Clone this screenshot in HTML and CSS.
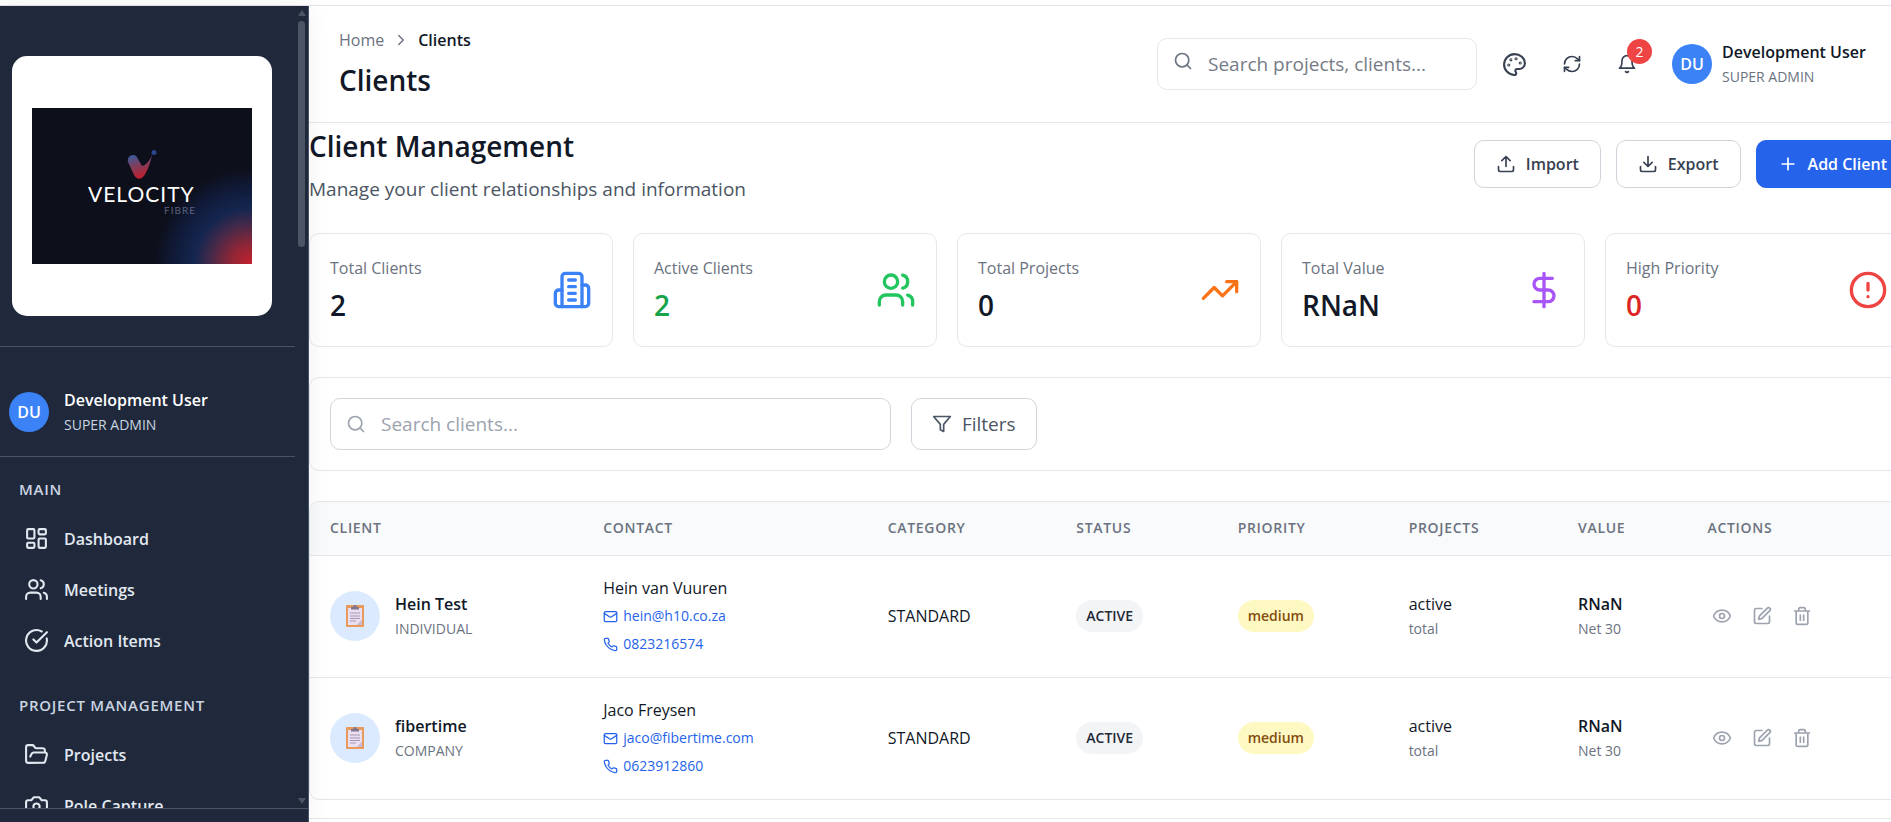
FILE: index.html
```html
<!DOCTYPE html>
<html lang="en">
<head>
<meta charset="utf-8">
<title>Clients</title>
<link rel="stylesheet" href="styles.css">
</head>
<body>
<svg class="sprite" aria-hidden="true">
  <symbol id="i-grid" viewBox="0 0 24 24"><rect width="7" height="9" x="3" y="3" rx="1"/><rect width="7" height="5" x="14" y="3" rx="1"/><rect width="7" height="9" x="14" y="12" rx="1"/><rect width="7" height="5" x="3" y="16" rx="1"/></symbol>
  <symbol id="i-users" viewBox="0 0 24 24"><path d="M16 21v-2a4 4 0 0 0-4-4H6a4 4 0 0 0-4 4v2"/><circle cx="9" cy="7" r="4"/><path d="M22 21v-2a4 4 0 0 0-3-3.87M16 3.13a4 4 0 0 1 0 7.75"/></symbol>
  <symbol id="i-check" viewBox="0 0 24 24"><path d="M21.801 10A10 10 0 1 1 17 3.335"/><path d="m9 11 3 3L22 4"/></symbol>
  <symbol id="i-folder" viewBox="0 0 24 24"><path d="m6 14 1.5-2.9A2 2 0 0 1 9.24 10H20a2 2 0 0 1 1.94 2.5l-1.54 6a2 2 0 0 1-1.95 1.5H4a2 2 0 0 1-2-2V5a2 2 0 0 1 2-2h3.9a2 2 0 0 1 1.69.9l.81 1.2a2 2 0 0 0 1.67.9H18a2 2 0 0 1 2 2v2"/></symbol>
  <symbol id="i-camera" viewBox="0 0 24 24"><path d="M14.5 4h-5L7 7H4a2 2 0 0 0-2 2v9a2 2 0 0 0 2 2h16a2 2 0 0 0 2-2V9a2 2 0 0 0-2-2h-3l-2.5-3z"/><circle cx="12" cy="13" r="3"/></symbol>
  <symbol id="i-chevron" viewBox="0 0 24 24"><path d="m9 18 6-6-6-6"/></symbol>
  <symbol id="i-search" viewBox="0 0 24 24"><circle cx="11" cy="11" r="8"/><path d="m21 21-4.3-4.3"/></symbol>
  <symbol id="i-palette" viewBox="0 0 24 24"><circle cx="13.5" cy="6.5" r=".5"/><circle cx="17.5" cy="10.5" r=".5"/><circle cx="8.5" cy="7.5" r=".5"/><circle cx="6.5" cy="12.5" r=".5"/><path d="M12 2C6.5 2 2 6.5 2 12s4.5 10 10 10c.926 0 1.648-.746 1.648-1.688 0-.437-.18-.835-.437-1.125-.29-.289-.438-.652-.438-1.125a1.64 1.64 0 0 1 1.668-1.668h1.996c3.051 0 5.555-2.503 5.555-5.554C21.965 6.012 17.461 2 12 2z"/></symbol>
  <symbol id="i-refresh" viewBox="0 0 24 24"><path d="M3 12a9 9 0 0 1 9-9 9.75 9.75 0 0 1 6.74 2.74L21 8"/><path d="M21 3v5h-5M21 12a9 9 0 0 1-9 9 9.75 9.75 0 0 1-6.74-2.74L3 16"/><path d="M8 16H3v5"/></symbol>
  <symbol id="i-bell" viewBox="0 0 24 24"><path d="M6 8a6 6 0 0 1 12 0c0 7 3 9 3 9H3s3-2 3-9"/><path d="M10.3 21a1.94 1.94 0 0 0 3.4 0"/></symbol>
  <symbol id="i-upload" viewBox="0 0 24 24"><path d="M21 15v4a2 2 0 0 1-2 2H5a2 2 0 0 1-2-2v-4M17 8l-5-5-5 5M12 3v12"/></symbol>
  <symbol id="i-download" viewBox="0 0 24 24"><path d="M21 15v4a2 2 0 0 1-2 2H5a2 2 0 0 1-2-2v-4M7 10l5 5 5-5M12 15V3"/></symbol>
  <symbol id="i-plus" viewBox="0 0 24 24"><path d="M5 12h14M12 5v14"/></symbol>
  <symbol id="i-building" viewBox="0 0 24 24"><path d="M6 22V4a2 2 0 0 1 2-2h8a2 2 0 0 1 2 2v18Z"/><path d="M6 12H4a2 2 0 0 0-2 2v6a2 2 0 0 0 2 2h2M18 9h2a2 2 0 0 1 2 2v9a2 2 0 0 1-2 2h-2M10 6h4M10 10h4M10 14h4M10 18h4"/></symbol>
  <symbol id="i-trend" viewBox="0 0 24 24"><path d="m22 7-8.500 8.500-5-5L2 17"/><path d="M16 7h6v6"/></symbol>
  <symbol id="i-dollar" viewBox="0 0 24 24"><path d="M12 2v20M17 5H9.500a3.500 3.500 0 0 0 0 7h5a3.500 3.500 0 0 1 0 7H6"/></symbol>
  <symbol id="i-alert" viewBox="0 0 24 24"><circle cx="12" cy="12" r="10"/><path d="M12 8v4M12 16h.01"/></symbol>
  <symbol id="i-filter" viewBox="0 0 24 24"><path d="M22 3H2l8 9.460V19l4 2v-8.540L22 3z"/></symbol>
  <symbol id="i-mail" viewBox="0 0 24 24"><rect width="20" height="16" x="2" y="4" rx="2"/><path d="m22 7-8.970 5.700a1.940 1.940 0 0 1-2.060 0L2 7"/></symbol>
  <symbol id="i-phone" viewBox="0 0 24 24"><path d="M22 16.920v3a2 2 0 0 1-2.180 2 19.790 19.790 0 0 1-8.630-3.070 19.500 19.500 0 0 1-6-6 19.790 19.790 0 0 1-3.070-8.670A2 2 0 0 1 4.110 2h3a2 2 0 0 1 2 1.720 12.840 12.840 0 0 0 .7 2.810 2 2 0 0 1-.45 2.110L8.090 9.910a16 16 0 0 0 6 6l1.270-1.270a2 2 0 0 1 2.110-.45 12.840 12.840 0 0 0 2.810.7A2 2 0 0 1 22 16.920z"/></symbol>
  <symbol id="i-eye" viewBox="0 0 24 24"><path d="M2.062 12.348a1 1 0 0 1 0-.696 10.750 10.750 0 0 1 19.876 0 1 1 0 0 1 0 .696 10.750 10.750 0 0 1-19.876 0"/><circle cx="12" cy="12" r="3"/></symbol>
  <symbol id="i-edit" viewBox="0 0 24 24"><path d="M12 3H5a2 2 0 0 0-2 2v14a2 2 0 0 0 2 2h14a2 2 0 0 0 2-2v-7"/><path d="M18.375 2.625a1 1 0 0 1 3 3l-9.013 9.014a2 2 0 0 1-.853.505l-2.873.84a.5.5 0 0 1-.62-.62l.84-2.873a2 2 0 0 1 .506-.852z"/></symbol>
  <symbol id="i-trash" viewBox="0 0 24 24"><path d="M3 6h18M19 6v14a2 2 0 0 1-2 2H7a2 2 0 0 1-2-2V6M8 6V4a2 2 0 0 1 2-2h4a2 2 0 0 1 2 2v2M10 11v6M14 11v6"/></symbol>
  <symbol id="i-clipboard" viewBox="0 0 18 22"><rect width="18" height="22" rx="1" fill="#e8995c" stroke="none"/><path d="M2 3h14v12l-5 5H2z" fill="#e9dff0" stroke="none"/><path d="M16 15v5h-5z" fill="#cbb9d8" stroke="none"/><path d="M5 4.500V2h2a2 2 0 0 1 4 0h2v2.500z" fill="#83768c" stroke="none"/><path d="M4 8h10M4 11h10M4 13.500h10M4 16h6" stroke="#a698b4" stroke-width="1"/></symbol>
</svg>

<div class="app">
  <aside class="sidebar">
    <div class="sidebar-scroll">
      <div class="sidebar-content">
        <div class="brand">
          <div class="brand-card">
            <svg class="brand-art" viewBox="0 0 220 156" role="img" aria-label="Velocity Fibre">
              <defs>
                <radialGradient id="glow" gradientUnits="userSpaceOnUse" cx="218" cy="156" r="96">
                  <stop offset="0" stop-color="#c3202f"/><stop offset=".2" stop-color="#8f2636"/><stop offset=".42" stop-color="#43294a"/><stop offset=".58" stop-color="#14264f"/><stop offset=".8" stop-color="#101a38"/><stop offset="1" stop-color="#0d0f1a"/>
                </radialGradient>
                <linearGradient id="mark" x1="0" y1="0" x2="0.300" y2="1"><stop offset="0" stop-color="#2c62ac"/><stop offset=".5" stop-color="#79405f"/><stop offset="1" stop-color="#bd1f30"/></linearGradient>
              </defs>
              <rect width="220" height="156" fill="#0d0f1a"/>
              <rect width="220" height="156" fill="url(#glow)"/>
              <path d="M96 54c-1-4 2-7 5-7 3 0 4 2 5 4l4 7c4-1 8-5 10-12-1 8-5 19-9 23-3 3-7 2-9-2z" fill="url(#mark)"/>
              <circle cx="122" cy="44.500" r="2.500" fill="#27468b"/>
              <text class="brand-name" x="56" y="94">VELOCITY</text>
              <text class="brand-sub" x="132" y="106">FIBRE</text>
            </svg>
          </div>
        </div>
        <div class="profile">
          <span class="avatar">DU</span>
          <div><div class="profile-name">Development User</div><div class="profile-role">SUPER ADMIN</div></div>
        </div>
        <nav class="nav">
          <h2 class="nav-title">MAIN</h2>
          <a class="nav-link" href="#"><svg class="icon icon-lg"><use href="#i-grid"/></svg>Dashboard</a>
          <a class="nav-link" href="#"><svg class="icon icon-lg"><use href="#i-users"/></svg>Meetings</a>
          <a class="nav-link" href="#"><svg class="icon icon-lg"><use href="#i-check"/></svg>Action Items</a>
          <h2 class="nav-title nav-title-next">PROJECT MANAGEMENT</h2>
          <a class="nav-link" href="#"><svg class="icon icon-lg"><use href="#i-folder"/></svg>Projects</a>
          <a class="nav-link" href="#"><svg class="icon icon-lg"><use href="#i-camera"/></svg>Pole Capture</a>
        </nav>
      </div>
      <div class="scrollbar" aria-hidden="true">
        <span class="arrow-up"></span><span class="thumb"></span><span class="arrow-down"></span>
      </div>
    </div>
    <div class="sidebar-foot"></div>
  </aside>

  <div class="main">
    <header class="topbar">
      <div class="topbar-head">
        <nav class="crumbs" aria-label="Breadcrumb"><a class="crumb-home" href="#">Home</a><svg class="icon icon-crumb"><use href="#i-chevron"/></svg><span class="crumb-here">Clients</span></nav>
        <h1 class="topbar-title">Clients</h1>
      </div>
      <div class="tools">
        <div class="search search-top"><svg class="icon icon-md"><use href="#i-search"/></svg><input type="text" aria-label="Search projects, clients" placeholder="Search projects, clients..."></div>
        <button class="tool" aria-label="Theme"><svg class="icon icon-lg"><use href="#i-palette"/></svg></button>
        <button class="tool" aria-label="Refresh"><svg class="icon icon-md"><use href="#i-refresh"/></svg></button>
        <button class="tool" aria-label="Notifications"><svg class="icon icon-md"><use href="#i-bell"/></svg><span class="count">2</span></button>
        <button class="account"><span class="avatar">DU</span><span class="account-text"><span class="account-name">Development User</span><span class="account-role">SUPER ADMIN</span></span></button>
      </div>
    </header>

    <main class="content">
      <div class="page-head">
        <div>
          <h2 class="page-title">Client Management</h2>
          <p class="page-sub">Manage your client relationships and information</p>
        </div>
        <div class="actions">
          <button class="btn"><svg class="icon icon-md"><use href="#i-upload"/></svg>Import</button>
          <button class="btn"><svg class="icon icon-md"><use href="#i-download"/></svg>Export</button>
          <button class="btn btn-primary"><svg class="icon icon-md"><use href="#i-plus"/></svg>Add Client</button>
        </div>
      </div>

      <section class="stats">
        <div class="card stat"><div><div class="stat-label">Total Clients</div><div class="stat-value">2</div></div><svg class="icon icon-xl blue"><use href="#i-building"/></svg></div>
        <div class="card stat"><div><div class="stat-label">Active Clients</div><div class="stat-value value-green">2</div></div><svg class="icon icon-xl green"><use href="#i-users"/></svg></div>
        <div class="card stat"><div><div class="stat-label">Total Projects</div><div class="stat-value">0</div></div><svg class="icon icon-xl orange"><use href="#i-trend"/></svg></div>
        <div class="card stat"><div><div class="stat-label">Total Value</div><div class="stat-value">RNaN</div></div><svg class="icon icon-xl purple"><use href="#i-dollar"/></svg></div>
        <div class="card stat"><div><div class="stat-label">High Priority</div><div class="stat-value value-red">0</div></div><svg class="icon icon-xl red"><use href="#i-alert"/></svg></div>
      </section>

      <section class="card filters">
        <div class="search search-list"><svg class="icon icon-md"><use href="#i-search"/></svg><input type="text" aria-label="Search clients" placeholder="Search clients..."></div>
        <button class="btn btn-filter"><svg class="icon icon-md"><use href="#i-filter"/></svg>Filters</button>
      </section>

      <section class="card table-card">
        <table class="clients">
          <colgroup><col class="c-client"><col class="c-contact"><col class="c-category"><col class="c-status"><col class="c-priority"><col class="c-projects"><col class="c-value"><col></colgroup>
          <thead><tr><th>CLIENT</th><th>CONTACT</th><th>CATEGORY</th><th>STATUS</th><th>PRIORITY</th><th>PROJECTS</th><th>VALUE</th><th>ACTIONS</th></tr></thead>
          <tbody>
            <tr>
              <td><div class="client"><span class="client-pic"><svg class="icon-clip"><use href="#i-clipboard"/></svg></span><div><div class="strong">Hein Test</div><div class="muted">INDIVIDUAL</div></div></div></td>
              <td><div class="contact-name">Hein van Vuuren</div><a class="contact" href="#"><svg class="icon icon-sm"><use href="#i-mail"/></svg>hein@h10.co.za</a><a class="contact" href="#"><svg class="icon icon-sm"><use href="#i-phone"/></svg>0823216574</a></td>
              <td>STANDARD</td>
              <td><span class="pill">ACTIVE</span></td>
              <td><span class="pill pill-yellow">medium</span></td>
              <td><div class="line">active</div><div class="muted">total</div></td>
              <td><div class="strong">RNaN</div><div class="muted">Net 30</div></td>
              <td><div class="row-actions"><button aria-label="View"><svg class="icon icon-md"><use href="#i-eye"/></svg></button><button aria-label="Edit"><svg class="icon icon-md"><use href="#i-edit"/></svg></button><button aria-label="Delete"><svg class="icon icon-md"><use href="#i-trash"/></svg></button></div></td>
            </tr>
            <tr>
              <td><div class="client"><span class="client-pic"><svg class="icon-clip"><use href="#i-clipboard"/></svg></span><div><div class="strong">fibertime</div><div class="muted">COMPANY</div></div></div></td>
              <td><div class="contact-name">Jaco Freysen</div><a class="contact" href="#"><svg class="icon icon-sm"><use href="#i-mail"/></svg>jaco@fibertime.com</a><a class="contact" href="#"><svg class="icon icon-sm"><use href="#i-phone"/></svg>0623912860</a></td>
              <td>STANDARD</td>
              <td><span class="pill">ACTIVE</span></td>
              <td><span class="pill pill-yellow">medium</span></td>
              <td><div class="line">active</div><div class="muted">total</div></td>
              <td><div class="strong">RNaN</div><div class="muted">Net 30</div></td>
              <td><div class="row-actions"><button aria-label="View"><svg class="icon icon-md"><use href="#i-eye"/></svg></button><button aria-label="Edit"><svg class="icon icon-md"><use href="#i-edit"/></svg></button><button aria-label="Delete"><svg class="icon icon-md"><use href="#i-trash"/></svg></button></div></td>
            </tr>
          </tbody>
        </table>
      </section>
    </main>
    <footer class="page-foot"></footer>
  </div>
</div>
</body>
</html>
```
FILE: styles.css
```css
* { box-sizing: border-box; }
body {
  margin: 0;
  height: 100vh;
  padding-top: 5px;
  overflow: hidden;
  background: #fff;
  color: #111827;
  font: 16px/24px "Open Sans", "Noto Sans", sans-serif;
}
h1, h2, p { margin: 0; }
a { color: inherit; text-decoration: none; }
button, input { font: inherit; color: inherit; }
button { margin: 0; padding: 0; border: 0; background: none; }
.sprite { position: absolute; width: 0; height: 0; }
.icon { flex: none; fill: none; stroke: currentColor; stroke-width: 2; stroke-linecap: round; stroke-linejoin: round; }
.icon-sm { width: 15px; height: 15px; }
.icon-crumb { width: 18px; height: 18px; color: #6b7280; }
.icon-md { width: 20px; height: 20px; }
.icon-lg { width: 25px; height: 25px; }
.icon-xl { width: 40px; height: 40px; }
.blue { color: #3b82f6; }
.green { color: #22c55e; }
.orange { color: #f97316; }
.purple { color: #a855f7; }
.red { color: #ef4444; }

.app { display: flex; height: 100%; border-top: 1px solid #e2e4e6; }

.sidebar {
  display: flex;
  flex: none;
  flex-direction: column;
  width: 309px;
  border-right: 1px solid #475569;
  background: #1f293b;
  color: #e2e8f0;
  box-shadow: 0 0 24px rgba(0, 0, 0, .06);
  z-index: 1;
}
.sidebar-scroll { display: flex; flex: 1; min-height: 0; overflow: hidden; }
.sidebar-content { flex: 1; }
.brand { padding: 50px 12px 30px; border-bottom: 1px solid #475569; }
.brand-card { display: flex; align-items: center; width: 260px; height: 260px; padding: 20px; border-radius: 15px; background: #fff; }
.brand-art { width: 100%; }
.brand-name { fill: #fff; font: 400 21px Lato, sans-serif; letter-spacing: 1px; }
.brand-sub { fill: #5b6180; font: 400 10px Lato, sans-serif; letter-spacing: 1px; }
.profile { display: flex; align-items: center; gap: 15px; padding: 40px 9px 20px; border-bottom: 1px solid #475569; }
.avatar { display: flex; flex: none; align-items: center; justify-content: center; width: 40px; height: 40px; border-radius: 50%; background: #3b82f6; color: #fff; font-weight: 600; }
.profile-name { color: #fff; font-weight: 600; line-height: 26px; }
.profile-role { color: #cbd5e1; font-size: 14px; line-height: 23px; }
.nav { padding-top: 20px; }
.nav-title { padding: 0 19px; margin-bottom: 12px; color: #cbd5e1; font-size: 15px; font-weight: 600; line-height: 24px; letter-spacing: .05em; }
.nav-title-next { margin-top: 27px; }
.nav-link { display: flex; align-items: center; gap: 15px; height: 51px; padding: 0 24px; font-weight: 600; }
.scrollbar { display: flex; flex: none; flex-direction: column; align-items: center; width: 13px; padding: 4px 0; }
.arrow-up { border: 4px solid transparent; border-top: 0; border-bottom: 6px solid #4b5563; }
.thumb { width: 7px; height: 226px; margin: 5px 0 auto; border-radius: 4px; background: #4b5563; }
.arrow-down { border: 4px solid transparent; border-bottom: 0; border-top: 6px solid #4b5563; }
.sidebar-foot { height: 14px; border-top: 1px solid #475569; }

/* The page body runs slightly past the window's right edge. */
.main { flex: 1; min-width: 0; margin-right: -18px; }
.topbar { display: flex; align-items: center; justify-content: space-between; padding: 20px 30px; border-bottom: 1px solid #e5e7eb; }
.topbar-head { padding-bottom: 2px; }
.crumbs { display: flex; align-items: center; gap: 8px; height: 28px; }
.crumb-home { color: #6b7280; }
.crumb-here { font-weight: 600; }
.topbar-title { margin-top: 6px; font-size: 28px; font-weight: 600; line-height: 40px; }
.tools { display: flex; align-items: center; gap: 15px; }
.search { display: flex; gap: 15px; height: 52px; padding: 0 15px; border: 1px solid #d1d5db; border-radius: 10px; color: #9ca3af; }
.search input { flex: 1; min-width: 0; padding: 0; border: 0; outline: 0; background: none; font-size: 19px; }
.search input::placeholder { color: #9ca3af; opacity: 1; }
.search-top { width: 320px; border-color: #e5e7eb; color: #6b7280; }
.search-top .icon { margin-top: 12px; }
.search-top input::placeholder { color: #757b86; }
.tool { display: flex; position: relative; padding: 10px; color: #374151; }
.count { position: absolute; top: -5px; right: -5px; width: 25px; height: 25px; border-radius: 50%; background: #ef4444; color: #fff; font-size: 14px; line-height: 25px; text-align: center; }
.account { display: flex; align-items: center; gap: 10px; padding: 0 10px; text-align: left; }
.account-text { min-width: 147px; }
.account-name, .account-role { display: block; }
.account-name { font-weight: 600; line-height: 25px; }
.account-role { color: #6b7280; font-size: 14px; line-height: 23px; }

.page-head { display: flex; align-items: center; justify-content: space-between; margin-bottom: 28px; }
.page-title { font-size: 28px; font-weight: 600; line-height: 46px; }
.page-sub { margin-top: 4px; color: #4b5563; font-size: 19px; line-height: 32px; }
.actions { display: flex; gap: 15px; }
.btn { display: flex; align-items: center; gap: 10px; height: 48px; padding: 0 21px; border: 1px solid #d1d5db; border-radius: 10px; background: #fff; color: #374151; font-weight: 600; white-space: nowrap; }
.btn-primary { border-color: #2563eb; background: #2563eb; color: #fff; }
.card { border: 1px solid #e5e7eb; border-radius: 10px; background: #fff; }
.stats { display: grid; grid-template-columns: repeat(5, 1fr); gap: 20px; }
.stat { display: flex; align-items: center; justify-content: space-between; padding: 22px 20px; }
.stat-label { color: #6b7280; line-height: 25px; }
.stat-value { margin-top: 5px; font-size: 28px; font-weight: 600; line-height: 38px; }
.value-green { color: #16a34a; }
.value-red { color: #dc2626; }
.filters { display: flex; gap: 20px; margin: 30px 0; padding: 20px; }
.search-list { width: 36%; align-items: center; }
.search-list input { align-self: stretch; }
.btn-filter { height: 52px; padding: 0 20px; font-size: 19px; font-weight: 400; color: #4b5563; }

.table-card { overflow: hidden; }
.clients { width: 100%; table-layout: fixed; border-collapse: collapse; }
.c-client { width: 17.1%; }
.c-contact { width: 17.8%; }
.c-category { width: 11.8%; }
.c-status { width: 10.1%; }
.c-priority { width: 10.7%; }
.c-projects { width: 10.6%; }
.c-value { width: 8.1%; }
.clients th { height: 53px; padding: 0 20px; background: #f9fafb; color: #6b7280; font-size: 14px; font-weight: 600; letter-spacing: .05em; text-align: left; }
.clients td { height: 122px; padding: 0 20px; border-top: 1px solid #e5e7eb; }
.client { display: flex; align-items: center; gap: 15px; }
.client-pic { display: flex; align-items: center; justify-content: center; width: 50px; height: 50px; border-radius: 50%; background: #dbeafe; }
.icon-clip { width: 18px; height: 22px; }
.strong, .line { line-height: 26px; }
.strong { font-weight: 600; }
.muted { color: #6b7280; font-size: 14px; line-height: 24px; }
.contact-name { line-height: 28px; }
.contact { display: flex; align-items: center; gap: 5px; color: #2563eb; font-size: 14px; line-height: 28px; }
.pill { display: inline-block; padding: 0 10px; border-radius: 16px; background: #f3f4f6; color: #1f2937; font-size: 14px; font-weight: 600; line-height: 32px; }
.pill-yellow { background: #fef9c3; color: #854d0e; }
.row-actions { display: flex; color: #9ca3af; }
.row-actions button { display: flex; margin-right: 10px; padding: 5px; }
.page-foot { margin-top: 18px; border-top: 1px solid #e5e7eb; }
```
